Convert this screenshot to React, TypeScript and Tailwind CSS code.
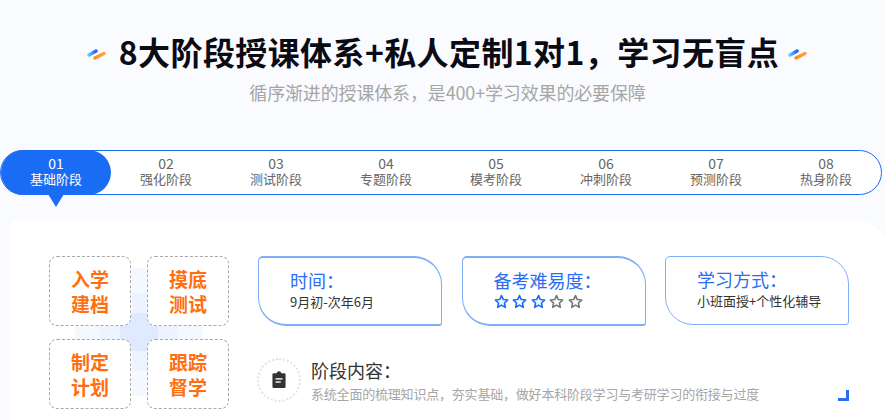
import React from "react";

const font = { fontFamily: '"Noto Sans CJK SC", "Noto Sans", sans-serif' };

const stages = ["基础阶段", "强化阶段", "测试阶段", "专题阶段", "模考阶段", "冲刺阶段", "预测阶段", "热身阶段"];
const cards = [["入学", "建档"], ["摸底", "测试"], ["制定", "计划"], ["跟踪", "督学"]];

function Dash() {
  return (
    <svg width="19" height="11" viewBox="0 0 19 11" fill="none" className="mt-[6px] shrink-0">
      <defs>
        <linearGradient id="bl" x1="0" y1="0" x2="1" y2="0">
          <stop offset="0" stopColor="#5cc8fa" />
          <stop offset="1" stopColor="#1f5ff0" />
        </linearGradient>
        <linearGradient id="or" x1="0" y1="0" x2="1" y2="0">
          <stop offset="0" stopColor="#ff8a1e" />
          <stop offset="1" stopColor="#ffa540" />
        </linearGradient>
      </defs>
      <line x1="2" y1="6" x2="9" y2="2" stroke="url(#bl)" strokeWidth="3.4" strokeLinecap="round" />
      <line x1="8" y1="9" x2="17" y2="4.5" stroke="url(#or)" strokeWidth="3.4" strokeLinecap="round" />
    </svg>
  );
}

function Star({ color }: { color: string }) {
  return (
    <svg width="15" height="15" viewBox="0 0 24 24" fill="none" stroke={color} strokeWidth="2.6" strokeLinejoin="round">
      <path d="M12 2.5l2.9 6.4 6.9.8-5.1 4.7 1.4 6.9-6.1-3.5-6.1 3.5 1.4-6.9-5.1-4.7 6.9-.8z" />
    </svg>
  );
}

function InfoCard({ title, thick, h, children }: { title: string; thick: boolean; h: string; children: React.ReactNode }) {
  return (
    <div
      className={`w-[184px] ${h} rounded-tl-[5px] rounded-br-[3px] rounded-tr-[28px] rounded-bl-[28px] border-[#7fadf8] bg-white pl-[31px] pt-[10px] ${thick ? "border-t-2 border-b-2 border-l border-r" : "border"}`}
    >
      <div className="text-[18px] leading-[24px] text-[#2a6df4]">{title}</div>
      <div className="text-[13px] leading-[20px] text-[#333333]">{children}</div>
    </div>
  );
}

export default function App() {
  return (
    <div style={font} className="relative h-[420px] w-[885px] overflow-hidden bg-[#fafbfe]">
      <div className="flex h-[74px] items-center justify-center pl-[9px] pt-[28px]">
        <Dash />
        <h1 className="ml-[13px] mr-[9px] text-[32px] font-bold leading-[46px] tracking-[0.4px] text-[#0b0b14]">8大阶段授课体系+私人定制1对1，学习无盲点</h1>
        <Dash />
      </div>
      <p className="mt-[5px] pl-[10px] text-center text-[18px] leading-[26px] tracking-[-0.15px] text-[#a6a6a6]">循序渐进的授课体系，是400+学习效果的必要保障</p>

      <div className="relative ml-0 mt-[45px] flex h-[45px] w-[882px] rounded-full border border-[#1a6cf5] bg-white">
        {stages.map((s, i) => (
          <div
            key={s}
            className={`-my-px flex h-[45px] w-[110.25px] flex-col items-center justify-center rounded-full pb-[3px] text-[13px] leading-[15px] ${i === 0 ? "bg-[#1a6cf5] text-white" : "text-[#666666]"}`}
          >
            <div className="text-[14px] leading-[15px]">{`0${i + 1}`}</div>
            <div className="h-[15px]">{s}</div>
          </div>
        ))}
        <div className="absolute left-[47px] top-[43px] h-0 w-0 border-x-[8px] border-t-[13px] border-x-transparent border-t-[#1a6cf5]" />
      </div>

      <div className="relative ml-[9px] mt-[24px] flex h-[220px] w-[884px] gap-[29px] rounded-tl-[12px] rounded-tr-[43px] bg-white pl-[40px] pt-[37px]">
        <div className="relative h-[152px] w-[180px] shrink-0">
          <svg className="absolute left-[26px] top-[12px]" width="128" height="128" viewBox="0 0 128 128">
            <rect x="57" y="0" width="16" height="128" fill="#f4f8ff" />
            <rect x="0" y="57" width="128" height="16" fill="#f4f8ff" />
            <rect x="57" y="25" width="16" height="78" fill="#eef4ff" />
            <rect x="25" y="57" width="78" height="16" fill="#eef4ff" />
            <rect x="45" y="45" width="38" height="38" rx="14" fill="#dfeafe" />
          </svg>
          <div className="relative grid grid-cols-[82px_82px] grid-rows-[70px_70px] gap-x-[16px] gap-y-[13px]">
            {cards.map((c) => (
              <div
                key={c[0]}
                className="flex flex-col items-center justify-center rounded-[8px] border border-dashed border-[#a8a8a8] bg-white text-[19px] font-bold leading-[25px] text-[#ff6f0f]"
              >
                <div>{c[0]}</div>
                <div>{c[1]}</div>
              </div>
            ))}
          </div>
        </div>

        <div className="flex flex-col">
          <div className="flex items-start gap-[19.5px]">
            <InfoCard title="时间：" thick h="h-[70px]">9月初-次年6月</InfoCard>
            <InfoCard title="备考难易度：" thick h="h-[70px]">
              <div className="flex gap-[3.5px] pt-[2px]">
                <Star color="#1a6cf5" />
                <Star color="#1a6cf5" />
                <Star color="#1a6cf5" />
                <Star color="#777777" />
                <Star color="#777777" />
              </div>
            </InfoCard>
            <InfoCard title="学习方式：" thick={false} h="h-[69px]">小班面授+个性化辅导</InfoCard>
          </div>

          <div className="-ml-[1px] mt-[31px] flex items-start gap-[10px]">
            <div className="mt-[1px] flex h-[44px] w-[44px] items-center justify-center rounded-full border-2 border-dotted border-[#e2e2e2]">
              <svg width="14" height="18" viewBox="0 0 16 20" preserveAspectRatio="none">
                <path d="M2 2.5h3.2a2.9 2.9 0 0 1 5.6 0H14a1.5 1.5 0 0 1 1.5 1.5v13.5A1.5 1.5 0 0 1 14 19H2a1.5 1.5 0 0 1-1.5-1.5V4A1.5 1.5 0 0 1 2 2.5z" fill="#333333" />
                <rect x="4" y="8" width="8" height="1.5" fill="#ffffff" />
                <rect x="4" y="11.5" width="6" height="1.5" fill="#ffffff" />
              </svg>
            </div>
            <div>
              <div className="text-[18px] leading-[26px] text-[#333333]">阶段内容：</div>
              <div className="mt-[1px] text-[13px] leading-[20px] tracking-[-0.2px] text-[#a6a6a6]">系统全面的梳理知识点，夯实基础，做好本科阶段学习与考研学习的衔接与过度</div>
            </div>
          </div>
        </div>

        <div className="absolute left-[829px] top-[171px] h-[11px] w-[11px] border-b-[3px] border-r-[3px] border-[#2a6df4]" />
      </div>
    </div>
  );
}
